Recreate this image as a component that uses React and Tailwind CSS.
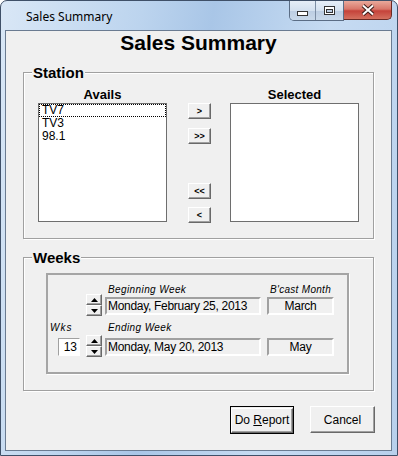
import React from 'react';

const ui = "font-['Liberation_Sans',Arial,sans-serif]";
const raised =
    'border border-t-white border-l-white border-b-[#696969] border-r-[#696969] shadow-[inset_-1px_-1px_0_#a0a0a0] bg-[#f0f0f0]';
const sunken = 'border border-t-[#a0a0a0] border-l-[#a0a0a0] border-b-white border-r-white';

function SmallButton({ label }) {
    return (
        <button className={`${raised} w-[23px] h-[16px] flex items-center justify-center text-[9px] font-bold leading-none text-black`}>
            {label}
        </button>
    );
}

function Spinner() {
    return (
        <div className="flex flex-col w-[16px]">
            {['up', 'down'].map((dir) => (
                <div key={dir} className={`${raised} h-[11px] flex items-center justify-center`}>
                    <svg width="7" height="4" viewBox="0 0 7 4">
                        {dir === 'up' ? <path d="M3.5 0 L7 4 L0 4 Z" fill="#000" /> : <path d="M0 0 L7 0 L3.5 4 Z" fill="#000" />}
                    </svg>
                </div>
            ))}
        </div>
    );
}

function Field({ children, className = '' }) {
    return (
        <div className={`border-2 border-t-[#a0a0a0] border-l-[#a0a0a0] border-b-white border-r-white bg-[#f0f0f0] h-[18px] text-[12px] leading-[14px] tracking-[-0.3px] overflow-hidden whitespace-nowrap ${className}`}>
            {children}
        </div>
    );
}

function Group({ title, children, className = '' }) {
    return (
        <fieldset className={`border border-[#a0a0a0] shadow-[inset_1px_1px_0_#fff,1px_1px_0_#fff] ${className}`}>
            <legend className="ml-[8px] px-[1px] bg-[#f0f0f0] text-[15px] leading-[17px] font-bold text-black">
                {title}
            </legend>
            {children}
        </fieldset>
    );
}

function ListBox({ items = [] }) {
    return (
        <div className="border border-[#6e6e6e] bg-white h-[119px] text-[12px] leading-[13px] text-black">
            {items.map((item, i) => (
                <div
                    key={item}
                    className={`h-[13px] ${i === 0 ? 'border border-dotted border-black pl-[2px] leading-[11px]' : 'pl-[3px]'}`}
                >
                    {item}
                </div>
            ))}
        </div>
    );
}

function Caption({ children, className = '' }) {
    return (
        <div className={`h-[14px] text-[10px] leading-[14px] italic ${className}`}>{children}</div>
    );
}

export default function App() {
    return (
        <div className="w-[398px] h-[456px] flex flex-col border border-[#3f5068] rounded-t-[7px] bg-[linear-gradient(100deg,#d9e7f6_0%,#bcd4ee_30%,#a9c6e7_45%,#c6dbf2_70%,#b8d0ec_100%)] font-['Liberation_Sans',Arial,sans-serif]">
            {/* title bar */}
            <div className="h-[29px] flex items-start shrink-0">
                <span className="ml-[25px] mt-[8px] text-[12px] leading-[16px] text-black font-['Noto_Sans','Open_Sans',sans-serif]">
                    Sales Summary
                </span>
                <div className="ml-auto mr-[5px] flex">
                    <div className="flex border border-t-0 border-[#5b6d85] rounded-bl-[5px] overflow-hidden">
                        <div className="w-[26px] h-[19px] flex items-end justify-center pb-[4px] bg-[linear-gradient(180deg,#e6eef7_0%,#d4e1ef_50%,#bccde2_51%,#c9d9ea_100%)] border-r border-[#7d8ea4]">
                            <svg width="11" height="5" viewBox="0 0 11 5">
                                <rect x="0.5" y="0.5" width="10" height="4" fill="#fff" stroke="#333" />
                            </svg>
                        </div>
                        <div className="w-[27px] h-[19px] flex items-center justify-center bg-[linear-gradient(180deg,#e6eef7_0%,#d4e1ef_50%,#bccde2_51%,#c9d9ea_100%)]">
                            <svg width="11" height="9" viewBox="0 0 11 9">
                                <rect x="0.5" y="0.5" width="10" height="8" fill="#fff" stroke="#333" />
                                <rect x="2.5" y="3.5" width="6" height="3" fill="#bccde2" stroke="#333" />
                            </svg>
                        </div>
                    </div>
                    <div className="w-[48px] h-[19px] flex items-center justify-center border border-t-0 border-l-0 border-[#6b2a24] rounded-br-[5px] bg-[linear-gradient(180deg,#e9a99b_0%,#d8776a_45%,#c5433a_55%,#d4705f_100%)]">
                        <svg width="16" height="12" viewBox="0 0 16 12">
                            <path d="M3 1.5 L13 10.5 M13 1.5 L3 10.5" stroke="#3b1c18" strokeWidth="4" />
                            <path d="M3 1.5 L13 10.5 M13 1.5 L3 10.5" stroke="#fff" strokeWidth="2" />
                        </svg>
                    </div>
                </div>
            </div>

            {/* client area */}
            <div className="flex-1 ml-[4px] mr-[5px] mb-[4px] border border-[#6a7b91] bg-[#f0f0f0] flex flex-col text-black">
                <h1 className="text-[21px] leading-[24px] font-bold text-center">Sales Summary</h1>

                <Group title="Station" className="mt-[9px] mx-[17px]">
                    <div className={`flex pl-[14px] pt-[6px] pb-[15px] ${ui}`}>
                        <div className="w-[129px]">
                            <div className="h-[15px] text-[13px] leading-[15px] font-bold text-center">Avails</div>
                            <div className="mt-[1px]">
                                <ListBox items={['TV7', 'TV3', '98.1']} />
                            </div>
                        </div>
                        <div className="ml-[21px] w-[23px] pt-[16px] flex flex-col">
                            <SmallButton label=">" />
                            <div className="mt-[9px]"><SmallButton label=">>" /></div>
                            <div className="mt-[39px]"><SmallButton label="<<" /></div>
                            <div className="mt-[8px]"><SmallButton label="<" /></div>
                        </div>
                        <div className="ml-[19px] w-[129px]">
                            <div className="h-[15px] text-[13px] leading-[15px] font-bold text-center">Selected</div>
                            <div className="mt-[1px]">
                                <ListBox />
                            </div>
                        </div>
                    </div>
                </Group>

                <Group title="Weeks" className="mt-[10px] mx-[17px]">
                    <div className="pl-[22px] pr-[24px] pt-[7px] pb-[16px]">
                        <div className={`h-[101px] border-2 border-[#a5a5a5] shadow-[1px_1px_0_#fff] pl-[2px] ${ui}`}>
                            {/* row 1 */}
                            <div className="flex items-start mt-[8px]">
                                <div className="w-[30px]" />
                                <div className="ml-[6px] mt-[11px]"><Spinner /></div>
                                <div className="ml-[3px] w-[156px]">
                                    <Caption className="pl-[3px] tracking-[0.4px]">Beginning Week</Caption>
                                    <Field className="pl-[1px]">Monday, February 25, 2013</Field>
                                </div>
                                <div className="ml-[6px] w-[67px]">
                                    <Caption className="text-center tracking-[0.3px]">B'cast Month</Caption>
                                    <Field className="text-center">March</Field>
                                </div>
                            </div>
                            {/* row 2 */}
                            <div className="flex items-start mt-[5px]">
                                <div className="w-[30px]">
                                    <Caption className="tracking-[1px]">Wks</Caption>
                                    <div className={`${sunken} ml-[8px] mt-[3px] w-[22px] h-[18px] bg-white text-[12px] leading-[16px] text-right pr-[2px]`}>13</div>
                                </div>
                                <div className="ml-[6px] mt-[14px]"><Spinner /></div>
                                <div className="ml-[3px] w-[156px]">
                                    <Caption className="pl-[3px] tracking-[0.4px]">Ending Week</Caption>
                                    <div className="mt-[3px]">
                                        <Field className="pl-[1px]">Monday, May 20, 2013</Field>
                                    </div>
                                </div>
                                <div className="ml-[6px] w-[67px] pt-[17px]">
                                    <Field className="text-center">May</Field>
                                </div>
                            </div>
                        </div>
                    </div>
                </Group>

                <div className={`mt-[15px] mr-[16px] flex justify-end gap-[16px] ${ui}`}>
                    <div className="border border-black">
                        <button className={`${raised} w-[62px] h-[25px] text-[12px] leading-none`}>
                            Do <span className="underline">R</span>eport
                        </button>
                    </div>
                    <button className={`${raised} w-[65px] h-[27px] text-[12px] leading-none`}>Cancel</button>
                </div>
            </div>
        </div>
    );
}
